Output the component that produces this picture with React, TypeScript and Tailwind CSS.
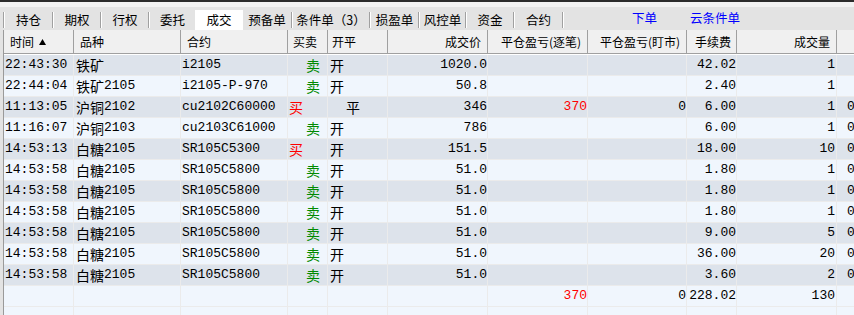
import React from 'react'

type Row = {
  time: string
  name: [string, string]
  code: string
  side: 'buy' | 'sell'
  oc: '开' | '平'
  price: string
  pnl1?: string
  pnl2?: string
  fee: string
  qty: string
  extra?: string
}

const tabs = ['持仓', '期权', '行权', '委托', '成交', '预备单', '条件单（3）', '损盈单', '风控单', '资金', '合约']
const tabWidths = [47, 46, 46, 45, 48, 48, 76, 47, 45, 46, 47]
const activeTab = 4

const rows: Row[] = [
  { time: '22:43:30', name: ['铁矿', ''], code: 'i2105', side: 'sell', oc: '开', price: '1020.0', fee: '42.02', qty: '1' },
  { time: '22:44:04', name: ['铁矿', '2105'], code: 'i2105-P-970', side: 'sell', oc: '开', price: '50.8', fee: '2.40', qty: '1' },
  { time: '11:13:05', name: ['沪铜', '2102'], code: 'cu2102C60000', side: 'buy', oc: '平', price: '346', pnl1: '370', pnl2: '0', fee: '6.00', qty: '1', extra: '0' },
  { time: '11:16:07', name: ['沪铜', '2103'], code: 'cu2103C61000', side: 'sell', oc: '开', price: '786', fee: '6.00', qty: '1', extra: '0' },
  { time: '14:53:13', name: ['白糖', '2105'], code: 'SR105C5300', side: 'buy', oc: '开', price: '151.5', fee: '18.00', qty: '10', extra: '0' },
  { time: '14:53:58', name: ['白糖', '2105'], code: 'SR105C5800', side: 'sell', oc: '开', price: '51.0', fee: '1.80', qty: '1', extra: '0' },
  { time: '14:53:58', name: ['白糖', '2105'], code: 'SR105C5800', side: 'sell', oc: '开', price: '51.0', fee: '1.80', qty: '1', extra: '0' },
  { time: '14:53:58', name: ['白糖', '2105'], code: 'SR105C5800', side: 'sell', oc: '开', price: '51.0', fee: '1.80', qty: '1', extra: '0' },
  { time: '14:53:58', name: ['白糖', '2105'], code: 'SR105C5800', side: 'sell', oc: '开', price: '51.0', fee: '9.00', qty: '5', extra: '0' },
  { time: '14:53:58', name: ['白糖', '2105'], code: 'SR105C5800', side: 'sell', oc: '开', price: '51.0', fee: '36.00', qty: '20', extra: '0' },
  { time: '14:53:58', name: ['白糖', '2105'], code: 'SR105C5800', side: 'sell', oc: '开', price: '51.0', fee: '3.60', qty: '2', extra: '0' },
]

const cols = 'grid grid-cols-[70px_107px_107px_40px_60px_100px_100px_99px_50px_100px_60px]'

function Sep(): React.JSX.Element {
  return <span className="mb-[2px] h-[16px] w-[2px] shrink-0 border-l border-r border-l-[#a0a0a0] border-r-white" />
}

function TabBar(): React.JSX.Element {
  const items: React.ReactNode[] = [<Sep key="s0" />]
  tabs.forEach((t, i) => {
    items.push(
      <div
        key={t}
        style={{ width: tabWidths[i] }}
        className={`flex h-[20px] shrink-0 items-center justify-center whitespace-nowrap ${
          i === activeTab ? 'bg-white' : ''
        }`}
      >
        {t}
      </div>
    )
    const next = i + 1
    if (i !== activeTab && next !== activeTab) items.push(<Sep key={'s' + next} />)
  })

  return (
    <div className="flex h-[23px] items-end pl-[3px] font-['Noto_Sans_CJK_SC','Noto_Sans',sans-serif] text-[12.5px] text-black">
      {items}
      <div className="mb-[2px] ml-[68px] self-end leading-[20px] text-[#0000ff]">下单</div>
      <div className="mb-[2px] ml-[33px] self-end leading-[20px] text-[#0000ff]">云条件单</div>
    </div>
  )
}

function Header(): React.JSX.Element {
  const h = 'flex h-[23px] items-center border-r border-[#a0a0a0] whitespace-nowrap'
  return (
    <div className={`${cols} h-[24px] border-b border-[#a0a0a0] bg-[#f0f0f0] font-['Noto_Sans_CJK_SC','Noto_Sans',sans-serif] text-[12px] text-black`}>
      <div className={`${h} pl-[6px]`}>
        时间
        <svg width="7" height="6" viewBox="0 0 7 6" className="ml-[5px]">
          <path d="M3.5 0 L7 6 L0 6 Z" fill="#000" />
        </svg>
      </div>
      <div className={`${h} pl-[6px]`}>品种</div>
      <div className={`${h} pl-[6px]`}>合约</div>
      <div className={`${h} pl-[5px]`}>买卖</div>
      <div className={`${h} pl-[4px]`}>开平</div>
      <div className={`${h} justify-end pr-[6px]`}>成交价</div>
      <div className={`${h} justify-end pr-[6px]`}>平仓盈亏(逐笔)</div>
      <div className={`${h} justify-end pr-[6px]`}>平仓盈亏(盯市)</div>
      <div className={`${h} justify-end pr-[5px]`}>手续费</div>
      <div className={`${h} justify-end pr-[6px]`}>成交量</div>
      <div className="h-[23px]" />
    </div>
  )
}

const cell = 'flex h-[20px] items-center border-r border-[#ebebeb] whitespace-nowrap overflow-hidden'
const cjk = "font-['Noto_Sans_CJK_SC',sans-serif] text-[14px]"

function DataRow({ r, i }: { r: Row; i: number }): React.JSX.Element {
  const bg = i % 2 === 0 ? 'bg-[#dde3eb]' : 'bg-[#f0f6fd]'
  return (
    <div className={`${cols} h-[21px] border-b border-[#ebebeb] ${bg}`}>
      <div className={`${cell} pl-[1px]`}>{r.time}</div>
      <div className={`${cell} pl-[2px]`}>
        <span className={cjk}>{r.name[0]}</span>
        {r.name[1]}
      </div>
      <div className={`${cell} pl-[1px]`}>{r.code}</div>
      {r.side === 'buy' ? (
        <div className={`${cell} pl-[1px] text-[#ff0000]`}>
          <span className={cjk}>买</span>
        </div>
      ) : (
        <div className={`${cell} pl-[18px] text-[#008a00]`}>
          <span className={cjk}>卖</span>
        </div>
      )}
      <div className={`${cell} ${r.oc === '平' ? 'pl-[18px]' : 'pl-[2px]'}`}>
        <span className={cjk}>{r.oc}</span>
      </div>
      <div className={`${cell} justify-end`}>{r.price}</div>
      <div className={`${cell} justify-end text-[#ff0000]`}>{r.pnl1 ?? ''}</div>
      <div className={`${cell} justify-end`}>{r.pnl2 ?? ''}</div>
      <div className={`${cell} justify-end`}>{r.fee}</div>
      <div className={`${cell} justify-end pr-[1px]`}>{r.qty}</div>
      <div className={`${cell} pl-[10px]`}>{r.extra ?? ''}</div>
    </div>
  )
}

export default function App(): React.JSX.Element {
  return (
    <div className="h-[315px] w-[854px] overflow-hidden bg-[#e3e3e3]">
      <div className="h-[2px] bg-[#2b2b2b]" />
      <div className="h-[5px] bg-[#f2f2f2]" />
      <TabBar />
      <div className="ml-[3px] h-[285px] overflow-hidden border-l border-[#9a9a9a] bg-[#f0f6fd] font-['Liberation_Mono','Noto_Sans_CJK_SC',monospace] text-[13px] text-black">
        <Header />
        <div className="h-[1px] bg-white" />
        {rows.map((r, i) => (
          <DataRow key={i} r={r} i={i} />
        ))}
        <div className={`${cols} h-[21px] border-b border-[#ebebeb] bg-[#f0f6fd]`}>
          <div className={cell} />
          <div className={cell} />
          <div className={cell} />
          <div className={cell} />
          <div className={cell} />
          <div className={cell} />
          <div className={`${cell} justify-end text-[#ff0000]`}>370</div>
          <div className={`${cell} justify-end`}>0</div>
          <div className={`${cell} justify-end`}>228.02</div>
          <div className={`${cell} justify-end pr-[1px]`}>130</div>
          <div className={cell} />
        </div>
        <div className={`${cols} h-[21px] bg-[#f0f6fd]`}>
          {Array.from({ length: 11 }).map((_, k) => (
            <div key={k} className={cell} />
          ))}
        </div>
      </div>
    </div>
  )
}
